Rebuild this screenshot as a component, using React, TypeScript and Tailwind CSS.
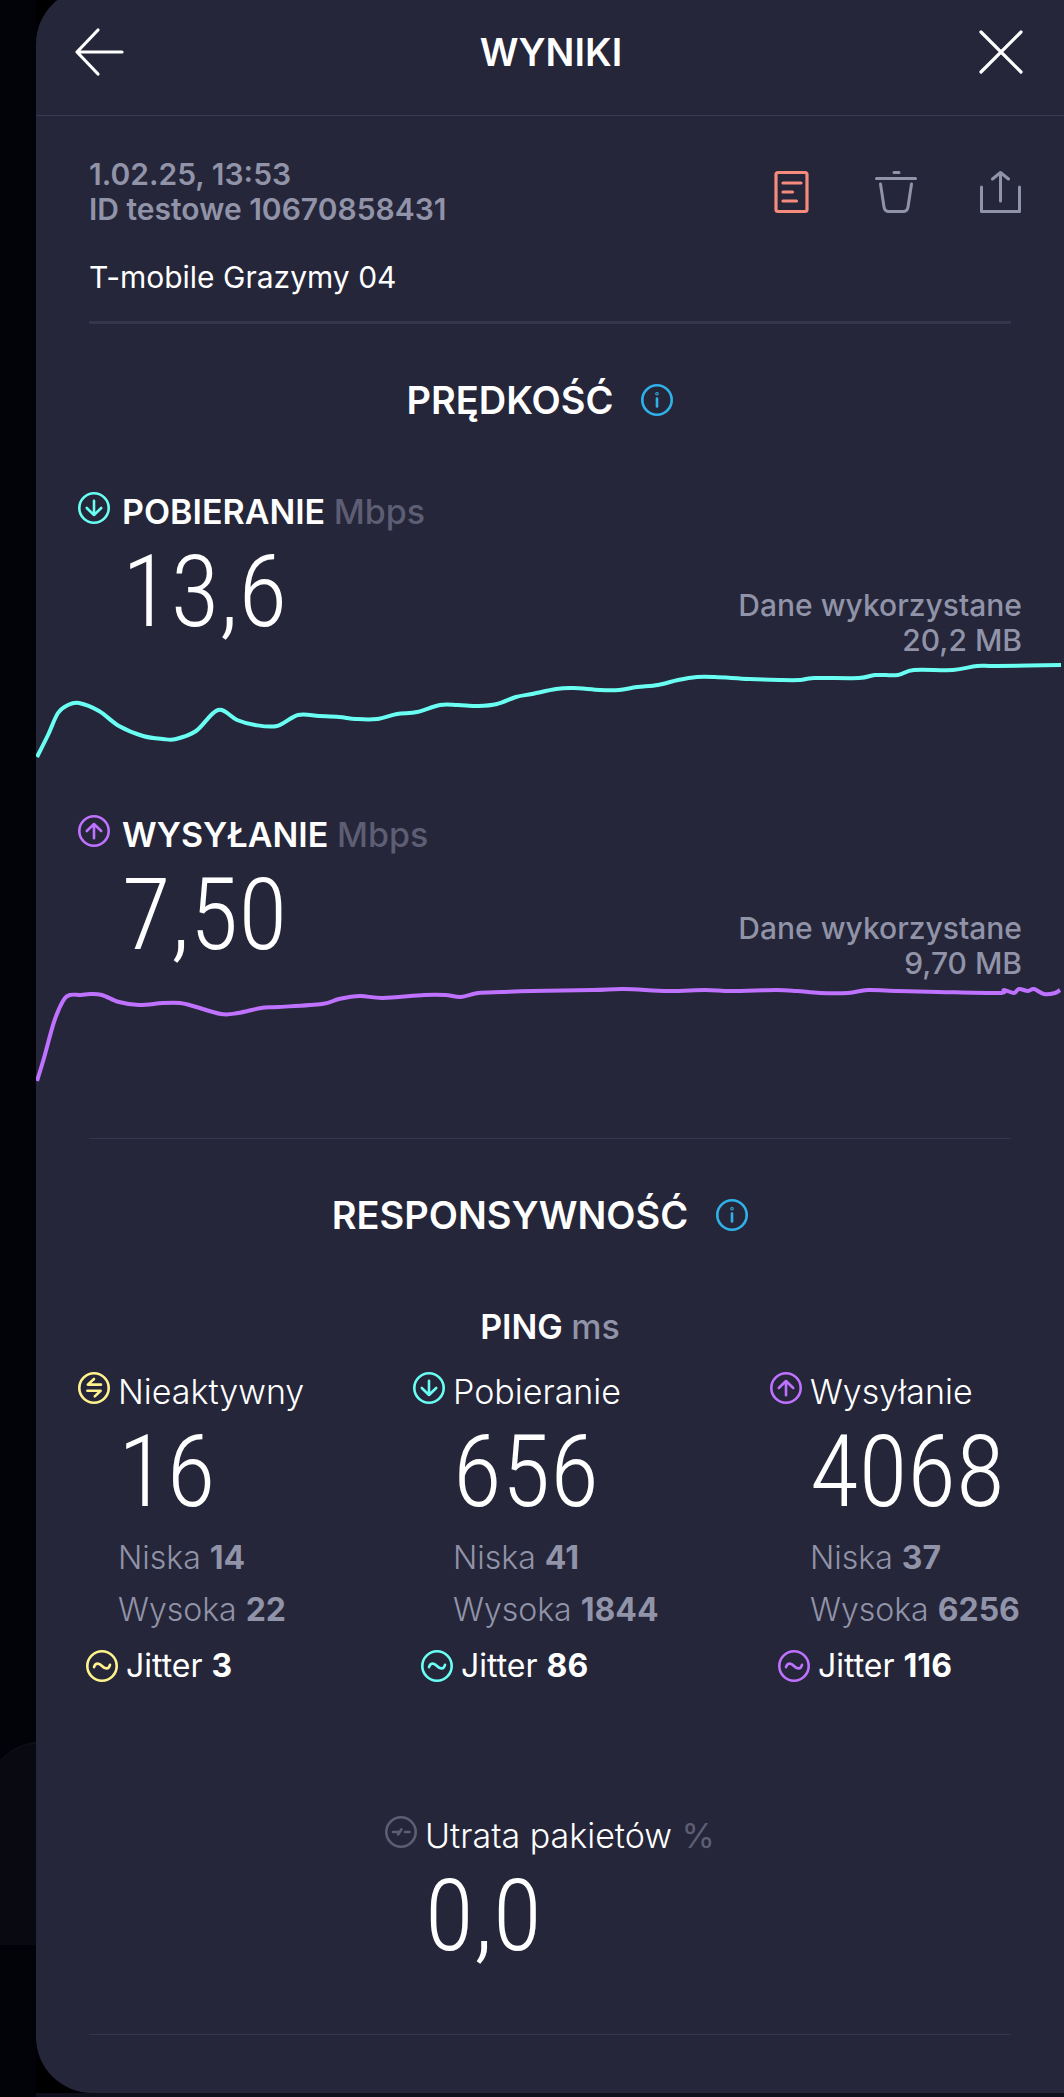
import type { ReactNode } from 'react';

type Point = [number, number];

const downloadPoints: Point[] = [
  [1, 99], [12, 77], [22, 55], [32, 47], [43, 45], [63, 53], [83, 68], [107, 78], [127, 81], [140, 81],
  [160, 73], [182, 52], [201, 62], [219, 67], [241, 68], [262, 57], [283, 58], [303, 59], [320, 61],
  [341, 61], [361, 56], [381, 54], [404, 47], [422, 47], [442, 48], [461, 46], [480, 39], [496, 36],
  [520, 31], [537, 30], [564, 32], [583, 32], [601, 29], [622, 27], [642, 22], [661, 19], [679, 19],
  [713, 21], [744, 22], [764, 22], [778, 20], [823, 20], [839, 17], [862, 17], [878, 12], [917, 12],
  [941, 8], [961, 8], [1025, 7],
];

const uploadPoints: Point[] = [
  [1, 100], [8, 77], [18, 41], [27, 20], [34, 14], [45, 14], [54, 13], [66, 14], [83, 21], [103, 24],
  [127, 22], [144, 22], [157, 25], [185, 33], [202, 32], [225, 27], [242, 26], [286, 23], [303, 18],
  [324, 15], [347, 17], [388, 14], [409, 14], [425, 16], [442, 12], [466, 11], [496, 10], [557, 9],
  [588, 8], [632, 10], [669, 9], [696, 10], [740, 9], [761, 10], [784, 12], [812, 12], [832, 9],
  [862, 10], [903, 11], [963, 12], [968, 9], [978, 12], [983, 8], [992, 10], [998, 8], [1008, 13],
  [1019, 12], [1024, 9],
];

const pings = [
  { icon: <IdleIcon />, label: "Nieaktywny", value: "16", low: "14", high: "22", jitter: "3", color: "text-[#fff38e]" },
  { icon: <DownIcon />, label: "Pobieranie", value: "656", low: "41", high: "1844", jitter: "86", color: "text-[#6afff3]" },
  { icon: <UpIcon />, label: "Wysyłanie", value: "4068", low: "37", high: "6256", jitter: "116", color: "text-[#bf71ff]" },
];

// Catmull-Rom spline through the samples
function smoothPath(points: Point[]) {
  let d = `M${points[0][0]} ${points[0][1]}`;
  for (let i = 0; i < points.length - 1; i++) {
    const p0 = points[Math.max(i - 1, 0)];
    const p1 = points[i];
    const p2 = points[i + 1];
    const p3 = points[Math.min(i + 2, points.length - 1)];
    d += ` C${p1[0] + (p2[0] - p0[0]) / 6} ${p1[1] + (p2[1] - p0[1]) / 6} ${p2[0] - (p3[0] - p1[0]) / 6} ${p2[1] - (p3[1] - p1[1]) / 6} ${p2[0]} ${p2[1]}`;
  }
  return d;
}

function CircleIcon({ children }: { children: ReactNode }) {
  return (
    <svg viewBox="0 0 32 32" className="size-8 shrink-0" fill="none" stroke="currentColor" strokeWidth="2.6" strokeLinecap="round" strokeLinejoin="round" aria-hidden="true">
      <circle cx="16" cy="16" r="14.7" />
      {children}
    </svg>
  );
}

function DownIcon() {
  return <CircleIcon><path d="M16 8.8V23M8.8 16l7.2 7 7.2-7" /></CircleIcon>;
}

function UpIcon() {
  return <CircleIcon><path d="M16 23.2V9M8.8 16L16 9l7.2 7" /></CircleIcon>;
}

function IdleIcon() {
  return <CircleIcon><path d="M23 12.6H9.8L16 7M9.4 18.8H22.6L16.8 24.4" /></CircleIcon>;
}

function JitterIcon() {
  return <CircleIcon><path d="M8 17.2c1.2-4.6 4.8-4.6 8-1.2s6.8 3.4 8-1.2" /></CircleIcon>;
}

function LossIcon() {
  return <CircleIcon><path d="M8 16h6M13 18.4l3.4-5M20 16h4.5" /></CircleIcon>;
}

function SectionTitle({ children }: { children: ReactNode }) {
  return (
    <div className="mt-[54px] flex items-center justify-center gap-7 pr-5">
      <h2 className="text-[38px] leading-[44px] font-semibold">{children}</h2>
      <button type="button" aria-label="Informacje" className="text-[#2fb2ea]">
        <CircleIcon>
          <path d="M16 14.5v8" />
          <circle cx="16" cy="9.8" r="0.5" />
        </CircleIcon>
      </button>
    </div>
  );
}

function BigValue({ children }: { children: ReactNode }) {
  return (
    <p className="font-['Roboto_Condensed',Roboto,sans-serif] text-[100px] leading-[120px] font-light text-white">
      {children}
    </p>
  );
}

type SpeedProps = {
  icon: ReactNode;
  label: string;
  value: string;
  used: string;
  color: string;
  points: Point[];
};

function Speed({ icon, label, value, used, color, points }: SpeedProps) {
  return (
    <section className={color}>
      <div className="flex items-start gap-3 pl-[42px]">
        {icon}
        <h3 className="text-[34px] leading-[40px] font-semibold text-white">
          {label} <span className="font-medium text-[#5d5d74]">Mbps</span>
        </h3>
      </div>
      <div className="flex h-[126px] items-start justify-between pr-[42px] pl-[86px]">
        <BigValue>{value}</BigValue>
        <p className="self-end text-right text-[30px] leading-[35px] font-medium text-[#9193a8]">
          Dane wykorzystane
          <br />
          {used}
        </p>
      </div>
      <svg viewBox="0 0 1028 104" className="block w-full" fill="none" stroke="currentColor" strokeWidth="4" strokeLinejoin="round" aria-hidden="true">
        <path d={smoothPath(points)} />
      </svg>
    </section>
  );
}

export default function App() {
  return (
    <div className="flex bg-black font-['Inter',sans-serif] text-white">
      <aside className="flex w-9 shrink-0 flex-col justify-end overflow-hidden bg-[#020308] pb-[152px]">
        <div className="-ml-4 h-51 w-24 rounded-tl-[60px] border-t-2 border-[#0e0f16] bg-[#080911]" />
      </aside>

      <div className="min-w-0 flex-1 border-b-4 border-[#100f1c]">
        <main className="-mt-3 rounded-l-[56px] bg-[#252639] pt-3 pb-[58px]">
          <header className="flex h-29 items-center justify-between border-b border-[#3a3b50] pr-10 pb-3 pl-[38px]">
            <button type="button" aria-label="Wstecz">
              <svg viewBox="0 0 50 50" className="size-[50px]" fill="none" stroke="currentColor" strokeWidth="3.2" strokeLinecap="round" strokeLinejoin="round">
                <path d="M24 3L3 25l21 22M3 25h45" />
              </svg>
            </button>
            <h1 className="text-[38px] leading-[44px] font-semibold">WYNIKI</h1>
            <button type="button" aria-label="Zamknij">
              <svg viewBox="0 0 46 46" className="size-[46px]" fill="none" stroke="currentColor" strokeWidth="3.2" strokeLinecap="round">
                <path d="M3 3l40 40M43 3L3 43" />
              </svg>
            </button>
          </header>

          <div className="flex items-start justify-between pt-[41px] pr-[42px] pl-[53px]">
            <div className="text-[30px] leading-[35px]">
              <p className="font-semibold text-[#9193a8]">
                1.02.25, 13:53
                <br />
                ID testowe 10670858431
              </p>
              <p className="mt-[33px] mb-[26px]">T-mobile Grazymy 04</p>
            </div>
            <div className="flex gap-[60px] pt-[13px] text-[#9193a8]">
              <button type="button" aria-label="Notatka" className="text-[#f58b7c]">
                <svg viewBox="0 0 44 44" className="size-11" fill="none" stroke="currentColor" strokeWidth="3.2" strokeLinecap="round" strokeLinejoin="round">
                  <rect x="6" y="2.5" width="31" height="39" rx="2" />
                  <path d="M13 13h18M13 22h9.5M13 31h13.5" />
                </svg>
              </button>
              <button type="button" aria-label="Usuń">
                <svg viewBox="0 0 44 44" className="size-11" fill="none" stroke="currentColor" strokeWidth="3" strokeLinecap="round" strokeLinejoin="round">
                  <path d="M20 2.5h5M2.5 8.5h39M6.5 14l3.5 23q.7 4.5 5 4.5h14q4.3 0 5-4.5L37.500 14" />
                </svg>
              </button>
              <button type="button" aria-label="Udostępnij">
                <svg viewBox="0 0 44 44" className="size-11" fill="none" stroke="currentColor" strokeWidth="3" strokeLinecap="round" strokeLinejoin="round">
                  <path d="M22.5 31V3M14.5 9l8-6.5 8 6.5M3.5 17v24.5h38V17" />
                </svg>
              </button>
            </div>
          </div>
          <hr className="mx-[53px] border-t-[3px] border-[#35364b]" />

          <SectionTitle>PRĘDKOŚĆ</SectionTitle>
          <div className="mt-[70px] flex flex-col gap-[53px]">
            <Speed icon={<DownIcon />} label="POBIERANIE" value="13,6" used="20,2 MB" color="text-[#6afff3]" points={downloadPoints} />
            <Speed icon={<UpIcon />} label="WYSYŁANIE" value="7,50" used="9,70 MB" color="text-[#bf71ff]" points={uploadPoints} />
          </div>
          <hr className="mx-[53px] mt-[53px] border-[#35364b]" />

          <SectionTitle>RESPONSYWNOŚĆ</SectionTitle>
          <h3 className="mt-[70px] text-center text-[34px] leading-[40px] font-semibold">
            PING <span className="font-medium text-[#9193a8]">ms</span>
          </h3>

          <div className="mt-[25px] grid grid-cols-[335fr_357fr_252fr] px-[42px] text-[32px]">
            {pings.map((ping) => (
              <div key={ping.label} className={ping.color}>
                <div className="flex items-start gap-2">
                  {ping.icon}
                  <h4 className="text-[34px] leading-[40px] font-light text-white">{ping.label}</h4>
                </div>
                <div className="pl-10">
                  <BigValue>{ping.value}</BigValue>
                  <p className="leading-[52px] font-light text-[#9193a8]">
                    Niska <b className="font-bold">{ping.low}</b>
                  </p>
                  <p className="leading-[52px] font-light text-[#9193a8]">
                    Wysoka <b className="font-bold">{ping.high}</b>
                  </p>
                </div>
                <div className="mt-[14px] flex items-center gap-2 pl-2">
                  <JitterIcon />
                  <p className="leading-[32px] text-white">
                    Jitter <b className="font-bold">{ping.jitter}</b>
                  </p>
                </div>
              </div>
            ))}
          </div>

          <div className="mt-[134px] flex justify-center gap-2 text-[#5d5d74]">
            <LossIcon />
            <div>
              <h4 className="text-[34px] leading-[40px]">
                <span className="font-light text-white">Utrata pakietów</span> %
              </h4>
              <BigValue>0,0</BigValue>
            </div>
          </div>
          <hr className="mx-[53px] mt-[58px] border-[#35364b]" />
        </main>
      </div>
    </div>
  );
}
